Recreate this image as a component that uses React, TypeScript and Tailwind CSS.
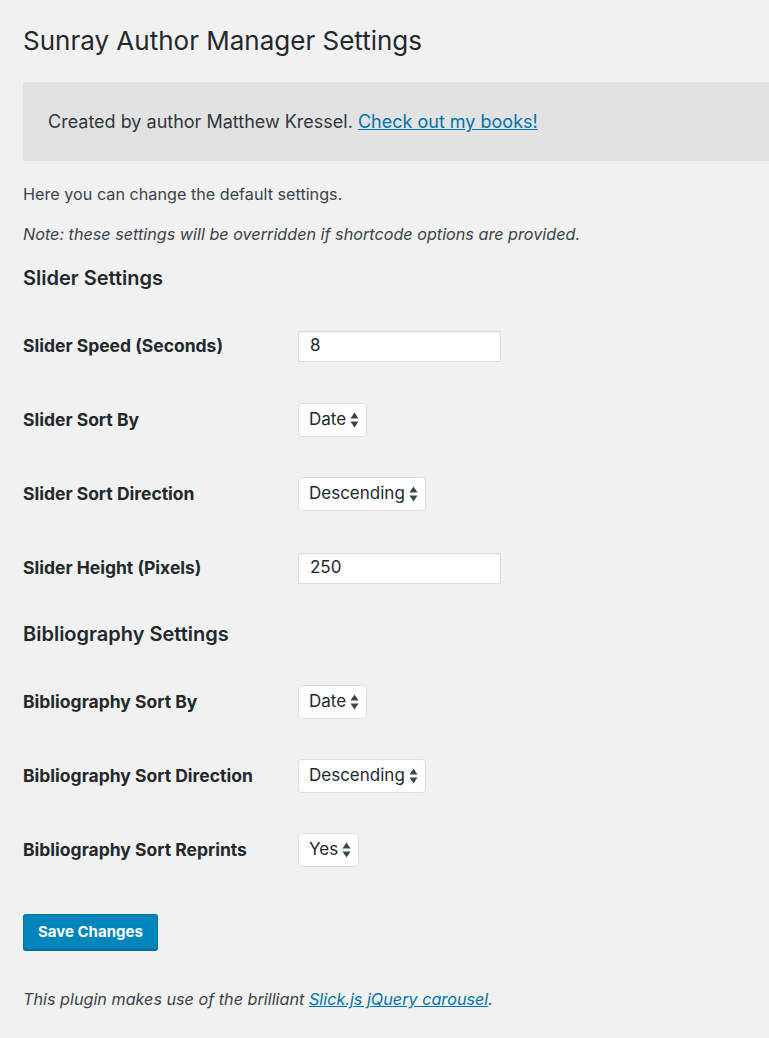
import { ReactNode } from "react";

const font = { fontFamily: "Inter, 'Liberation Sans', sans-serif" };

function Arrows() {
    return (
        <svg width="9" height="16" viewBox="0 0 9 16" className="ml-[4px] shrink-0">
            <path d="M4.5 0.5 L8.5 6.5 L0.5 6.5 Z" fill="#3c434a" />
            <path d="M4.5 15.5 L8.5 9.5 L0.5 9.5 Z" fill="#3c434a" />
        </svg>
    );
}

function Select({ value }: { value: string }) {
    return (
        <div className="flex items-center h-[34px] pl-[10px] pr-[7px] bg-white border border-[#dddddd] rounded-[4px] text-[17px] text-[#23282d]">
            {value}
            <Arrows />
        </div>
    );
}

function TextInput({ value }: { value: string }) {
    return (
        <div className="flex items-center w-[203px] h-[31px] px-[11px] bg-white border border-[#dddddd] shadow-[inset_0_1px_2px_rgba(0,0,0,0.07)] text-[17px] text-[#23282d]">
            {value}
        </div>
    );
}

function Row({ label, children }: { label: string; children: ReactNode }) {
    return (
        <div className="flex items-center h-[74px]">
            <div className="w-[275px] shrink-0 text-[17.5px] font-bold text-[#23282d]">{label}</div>
            {children}
        </div>
    );
}

export default function App() {
    return (
        <div className="min-h-screen bg-[#f1f1f1] pl-[23px] text-[#23282d]" style={font}>
            <h1 className="pt-[26px] text-[26px] leading-[29px] font-normal">Sunray Author Manager Settings</h1>

            <div className="mt-[27px] h-[79px] bg-[#e2e2e2] flex items-center pl-[25px] text-[18px] text-[#32373c]">
                <span>
                    Created by author Matthew Kressel.{" "}
                    <a href="#" className="text-[#0073aa] underline">Check out my books!</a>
                </span>
            </div>

            <p className="mt-[23px] text-[16.2px] leading-[20px] text-[#3c434a]">Here you can change the default settings.</p>
            <p className="mt-[20px] text-[16.2px] leading-[20px] italic text-[#3c434a]">
                Note: these settings will be overridden if shortcode options are provided.
            </p>

            <h2 className="mt-[22px] text-[20px] leading-[24px] font-semibold">Slider Settings</h2>
            <div className="mt-[19px]">
                <Row label="Slider Speed (Seconds)"><TextInput value="8" /></Row>
                <Row label="Slider Sort By"><Select value="Date" /></Row>
                <Row label="Slider Sort Direction"><Select value="Descending" /></Row>
                <Row label="Slider Height (Pixels)"><TextInput value="250" /></Row>
            </div>

            <h2 className="mt-[17px] text-[20px] leading-[24px] font-semibold">Bibliography Settings</h2>
            <div className="mt-[19px]">
                <Row label="Bibliography Sort By"><Select value="Date" /></Row>
                <Row label="Bibliography Sort Direction"><Select value="Descending" /></Row>
                <Row label="Bibliography Sort Reprints"><Select value="Yes" /></Row>
            </div>

            <button className="mt-[27px] h-[36px] px-[14px] bg-[#0085ba] border border-[#0073aa] border-b-[#006799] shadow-[0_1px_0_#006799] rounded-[3px] text-white text-[15px] font-bold">
                Save Changes
            </button>

            <p className="mt-[39px] pb-[29px] text-[16.2px] leading-[20px] italic text-[#3c434a]">
                This plugin makes use of the brilliant{" "}
                <a href="#" className="text-[#0073aa] underline">Slick.js jQuery carousel</a>.
            </p>
        </div>
    );
}
